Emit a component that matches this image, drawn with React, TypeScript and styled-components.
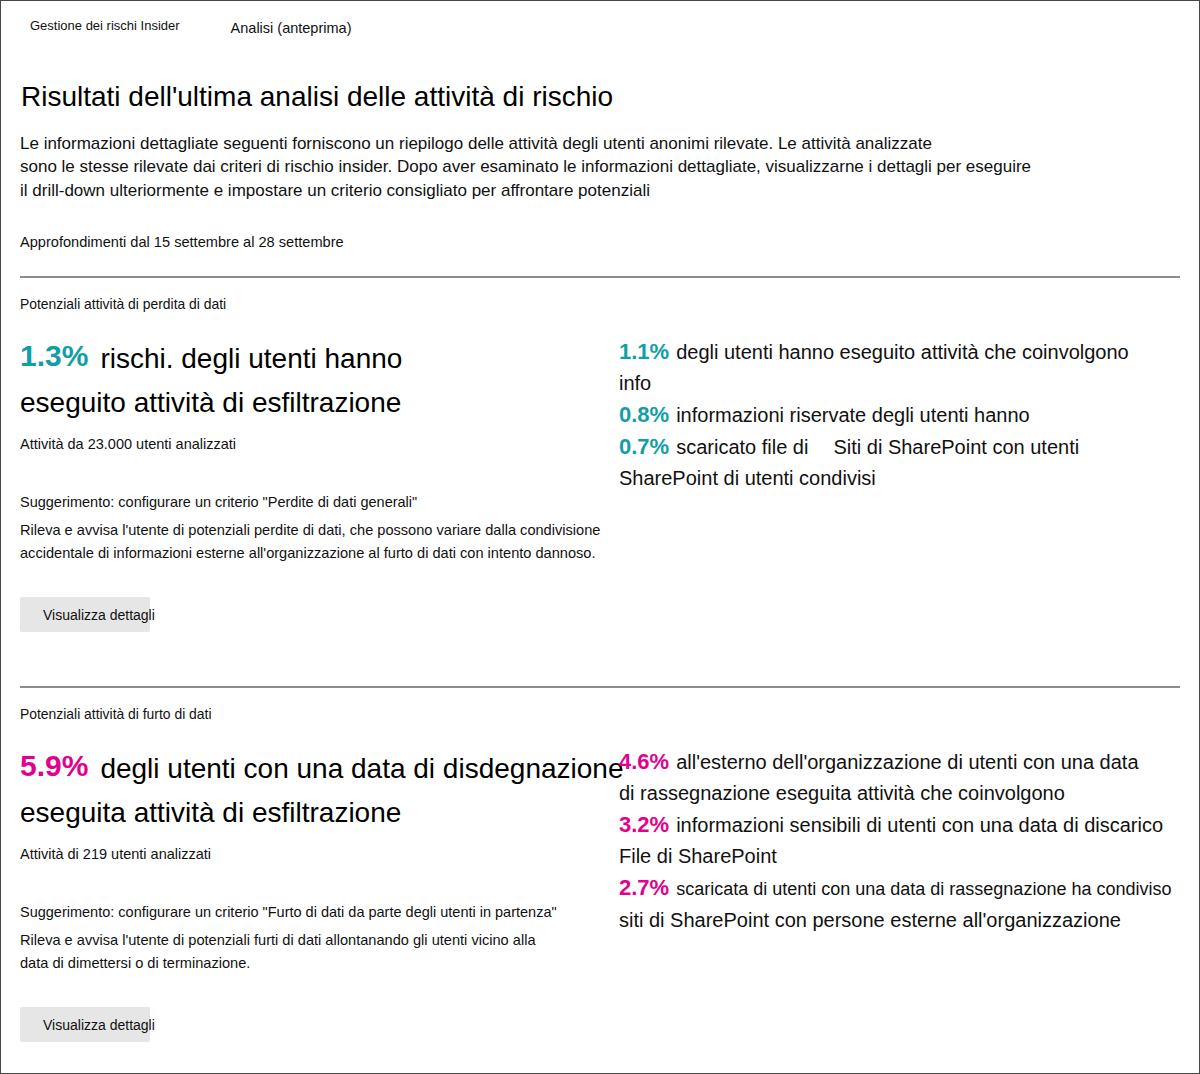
import React from "react";
import styled, { createGlobalStyle } from "styled-components";

const GlobalStyle = createGlobalStyle`
  html, body {
    margin: 0;
    padding: 0;
    background: #ffffff;
  }
  body {
    font-family: "Liberation Sans", Arial, sans-serif;
    color: #111111;
  }
`;

const Frame = styled.div`
  box-sizing: border-box;
  width: 1200px;
  height: 1074px;
  border: 1px solid #474747;
  padding: 0 19px;
  overflow: hidden;
`;

const TabBar = styled.div`
  display: flex;
  align-items: flex-start;
  padding-top: 17px;
`;

const Tab = styled.div<{ $size: number; $offset: number; $left: number }>`
  font-size: ${(p) => p.$size}px;
  line-height: ${(p) => p.$size + 3}px;
  margin-top: ${(p) => p.$offset}px;
  margin-left: ${(p) => p.$left}px;
  color: #111;
  white-space: nowrap;
`;

const Title = styled.h1`
  margin: 42px 0 0 1px;
  font-size: 28px;
  font-weight: 400;
  line-height: 34px;
  color: #000;
`;

const Intro = styled.p`
  margin: 18px 0 0;
  font-size: 17px;
  line-height: 23.5px;
`;

const Line = styled.span`
  display: block;
  white-space: nowrap;
`;

const Range = styled.div`
  margin-top: 30px;
  font-size: 14.6px;
  line-height: 20px;
`;

const Divider = styled.hr<{ $top: number }>`
  margin: ${(p) => p.$top}px 0 0;
  height: 2px;
  border: 0;
  background: #8c8c8c;
`;

const SectionHeader = styled.div`
  margin-top: 18px;
  font-size: 13.9px;
  line-height: 16px;
`;

const StatGrid = styled.div`
  display: grid;
  grid-template-columns: 599px 1fr;
  margin-top: 24px;
`;

const LeftColumn = styled.div`
  display: flex;
  flex-direction: column;
  align-items: flex-start;
`;

const Headline = styled.div`
  font-size: 28px;
  line-height: 43.5px;
  color: #000;
`;

const BigPercent = styled.span<{ $color: string }>`
  font-size: 30px;
  font-weight: 700;
  color: ${(p) => p.$color};
  margin-right: 12px;
  position: relative;
  top: -2px;
`;

const Analyzed = styled.div`
  margin-top: 10px;
  font-size: 14.5px;
  line-height: 20px;
`;

const Suggestion = styled.div`
  margin-top: 38px;
  font-size: 14.5px;
  line-height: 20px;
`;

const Description = styled.div`
  margin-top: 7px;
  font-size: 14.6px;
  line-height: 23px;
`;

const DetailsButton = styled.button`
  box-sizing: border-box;
  margin-top: 32px;
  width: 130px;
  height: 35px;
  padding: 0 0 0 23px;
  border: 0;
  border-radius: 2px;
  background: #e6e6e6;
  font-family: "Liberation Sans", Arial, sans-serif;
  font-size: 14px;
  color: #111;
  text-align: left;
  white-space: nowrap;
  overflow: visible;
  cursor: pointer;
`;

const RightColumn = styled.div`
  font-size: 20px;
  line-height: 31px;
  color: #111;
`;

const SmallPercent = styled.span<{ $color: string }>`
  font-size: 22px;
  font-weight: 700;
  color: ${(p) => p.$color};
  margin-right: 7px;
`;

const Small = styled.span`
  font-size: 18px;
`;

const Gap = styled.span`
  display: inline-block;
  width: 25px;
`;

const Spacer = styled.div`
  height: 54px;
`;

const TEAL = "#129ea6";
const MAGENTA = "#e3008c";

type SectionProps = {
  header: string;
  color: string;
  percent: string;
  headline: [string, string];
  analyzed: string;
  suggestion: string;
  description: string[];
  right: React.ReactNode;
};

const Section = ({
  header,
  color,
  percent,
  headline,
  analyzed,
  suggestion,
  description,
  right,
}: SectionProps) => (
  <section>
    <SectionHeader>{header}</SectionHeader>
    <StatGrid>
      <LeftColumn>
        <Headline>
          <Line>
            <BigPercent $color={color}>{percent}</BigPercent>
            {headline[0]}
          </Line>
          <Line>{headline[1]}</Line>
        </Headline>
        <Analyzed>{analyzed}</Analyzed>
        <Suggestion>{suggestion}</Suggestion>
        <Description>
          {description.map((d) => (
            <Line key={d}>{d}</Line>
          ))}
        </Description>
        <DetailsButton>Visualizza dettagli</DetailsButton>
      </LeftColumn>
      <RightColumn>{right}</RightColumn>
    </StatGrid>
  </section>
);

export default function App() {
  return (
    <>
      <GlobalStyle />
      <Frame>
        <TabBar>
          <Tab $size={13} $offset={0} $left={10}>
            Gestione dei rischi Insider
          </Tab>
          <Tab $size={14.5} $offset={2} $left={51}>
            Analisi (anteprima)
          </Tab>
        </TabBar>

        <Title>Risultati dell'ultima analisi delle attività di rischio</Title>
        <Intro>
          <Line>
            Le informazioni dettagliate seguenti forniscono un riepilogo delle
            attività degli utenti anonimi rilevate. Le attività analizzate
          </Line>
          <Line>
            sono le stesse rilevate dai criteri di rischio insider. Dopo aver
            esaminato le informazioni dettagliate, visualizzarne i dettagli per
            eseguire
          </Line>
          <Line>
            il drill-down ulteriormente e impostare un criterio consigliato per
            affrontare potenziali
          </Line>
        </Intro>
        <Range>Approfondimenti dal 15 settembre al 28 settembre</Range>

        <Divider $top={24} />
        <Section
          header="Potenziali attività di perdita di dati"
          color={TEAL}
          percent="1.3%"
          headline={[
            "rischi. degli utenti hanno",
            "eseguito attività di esfiltrazione",
          ]}
          analyzed="Attività da 23.000 utenti analizzati"
          suggestion={'Suggerimento: configurare un criterio "Perdite di dati generali"'}
          description={[
            "Rileva e avvisa l'utente di potenziali perdite di dati, che possono variare dalla condivisione",
            "accidentale di informazioni esterne all'organizzazione al furto di dati con intento dannoso.",
          ]}
          right={
            <>
              <Line>
                <SmallPercent $color={TEAL}>1.1%</SmallPercent>
                degli utenti hanno eseguito attività che coinvolgono
              </Line>
              <Line>info</Line>
              <Line>
                <SmallPercent $color={TEAL}>0.8%</SmallPercent>
                informazioni riservate degli utenti hanno
              </Line>
              <Line>
                <SmallPercent $color={TEAL}>0.7%</SmallPercent>
                scaricato file di
                <Gap />
                Siti di SharePoint con utenti
              </Line>
              <Line>SharePoint di utenti condivisi</Line>
            </>
          }
        />
        <Spacer />

        <Divider $top={0} />
        <Section
          header="Potenziali attività di furto di dati"
          color={MAGENTA}
          percent="5.9%"
          headline={[
            "degli utenti con una data di disdegnazione",
            "eseguita attività di esfiltrazione",
          ]}
          analyzed="Attività di 219 utenti analizzati"
          suggestion={
            'Suggerimento: configurare un criterio "Furto di dati da parte degli utenti in partenza"'
          }
          description={[
            "Rileva e avvisa l'utente di potenziali furti di dati allontanando gli utenti vicino alla",
            "data di dimettersi o di terminazione.",
          ]}
          right={
            <>
              <Line>
                <SmallPercent $color={MAGENTA}>4.6%</SmallPercent>
                all'esterno dell'organizzazione di utenti con una data
              </Line>
              <Line>di rassegnazione eseguita attività che coinvolgono</Line>
              <Line>
                <SmallPercent $color={MAGENTA}>3.2%</SmallPercent>
                informazioni sensibili di utenti con una data di discarico
              </Line>
              <Line>File di SharePoint</Line>
              <Line>
                <SmallPercent $color={MAGENTA}>2.7%</SmallPercent>
                <Small>
                  scaricata di utenti con una data di rassegnazione ha condiviso
                </Small>
              </Line>
              <Line>siti di SharePoint con persone esterne all'organizzazione</Line>
            </>
          }
        />
      </Frame>
    </>
  );
}
